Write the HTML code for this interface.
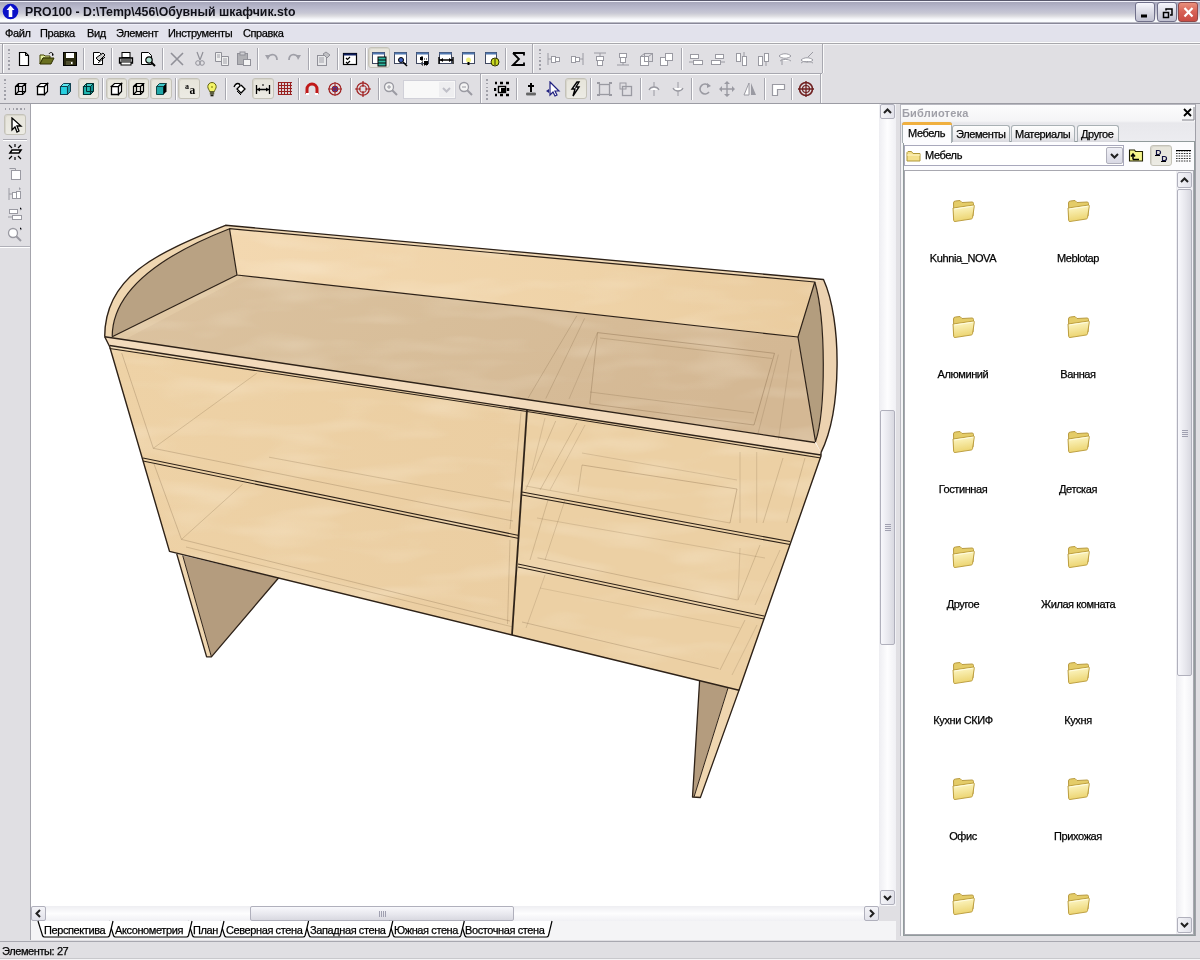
<!DOCTYPE html><html><head><meta charset="utf-8"><style>
*{margin:0;padding:0;box-sizing:border-box}
html,body{width:1200px;height:960px;overflow:hidden;background:#e0dfe3;font-family:"Liberation Sans",sans-serif;font-size:11px;color:#000;letter-spacing:-0.4px}
.a{position:absolute}
span,div{will-change:transform}
body{-webkit-text-stroke-width:0.25px}
#title .t{-webkit-text-stroke:0}
#title{left:0;top:0;width:1200px;height:24px;background:linear-gradient(#58586c 0,#58586c 1px,#f0f0fa 1px,#f0f0fa 2px,#a8a8bc 2.5px,#b4b4c8 6px,#bcbcce 9px,#c8c8d4 13px,#dcdce0 16px,#eeeef2 18px,#fafcfe 20px,#fafcfe 21.5px,#eeeef2 22px,#888898 23px,#888898 24px)}
#title .t{left:25px;top:5px;font-weight:bold;font-size:12.3px;color:#101018;letter-spacing:0}
#menu{left:0;top:24px;width:1200px;height:19px;background:linear-gradient(#f0f0fa 0,#f0f0fa 1px,#e2e2ec 1.5px,#e2e2ec 17px,#dcdce2 18px,#fcfcfc 18px)}
#menu span{position:absolute;top:3px}
.sep{position:absolute;width:2px;border-left:1px solid #a8a8b0;border-right:1px solid #fff}
.hsep{position:absolute;height:2px;border-top:1px solid #a8a8b0;border-bottom:1px solid #fff}
.grip{position:absolute;width:2px;background:repeating-linear-gradient(#a0a0a8 0,#a0a0a8 1.5px,transparent 1.5px,transparent 3.8px)}
.hgrip{position:absolute;height:2px;background:repeating-linear-gradient(90deg,#a0a0a8 0,#a0a0a8 1.5px,transparent 1.5px,transparent 3.8px)}
.pb{position:absolute;border:1px solid #c4c2b8;border-radius:3px;background:linear-gradient(#e6e4da,#ecebe4);box-shadow:inset 1px 1px 0 #d8d6cc}
.sb{position:absolute;border:1px solid #b0b0bc;border-radius:2px;background:linear-gradient(90deg,#f4f4f8,#e2e2ea)}
</style></head><body>
<div id="title" class="a">
<svg class="a" style="left:2px;top:3px" width="17" height="17" viewBox="0 0 17 17"><circle cx="8.5" cy="8.5" r="7.8" fill="#0a10c8"/><path d="M8.5 2.5 L12.5 7 L10.3 7 L10.3 14 L6.7 14 L6.7 7 L4.5 7 Z" fill="#fff"/></svg>
<div class="a t">PRO100 - D:\Temp\456\Обувный шкафчик.sto</div>
<div class="a" style="left:1135px;top:2px;width:20px;height:20px;border:1px solid #70708a;border-radius:3px;background:linear-gradient(#f6f6fc,#dedee8 45%,#c0c0d0)"><svg class="a" style="left:0;top:0" width="19" height="18"><rect x="5" y="11.5" width="6" height="3" fill="#000"/></svg></div>
<div class="a" style="left:1157px;top:2px;width:20px;height:20px;border:1px solid #70708a;border-radius:3px;background:linear-gradient(#f6f6fc,#dedee8 45%,#c0c0d0)"><svg class="a" style="left:0;top:0" width="19" height="18"><path d="M5.5 9.5h5v5h-5z" fill="none" stroke="#000" stroke-width="1.5"/><path d="M8 7.5V6h6v6h-2" fill="none" stroke="#000" stroke-width="1.5"/></svg></div>
<div class="a" style="left:1178px;top:2px;width:20px;height:20px;border:1px solid #904848;border-radius:3px;background:linear-gradient(#e8907c,#d86458 45%,#c84c44)"><svg class="a" style="left:0;top:0" width="19" height="18"><path d="M5.5 5l8 8.5M13.5 5l-8 8.5" stroke="#fff" stroke-width="2.2"/></svg></div>
</div>
<div id="menu" class="a">
<span style="left:5px">Файл</span>
<span style="left:40px">Правка</span>
<span style="left:87px">Вид</span>
<span style="left:116px">Элемент</span>
<span style="left:168px">Инструменты</span>
<span style="left:243px">Справка</span>
</div>
<div class="a" style="left:0;top:43px;width:1200px;height:1px;background:#a8a8ac"></div>
<div class="a" style="left:0;top:44px;width:1200px;height:59px;background:linear-gradient(#f4f4f6 0,#f4f4f6 1px,#e0dfe3 1px)"></div>
<div class="a" style="left:0;top:73px;width:822px;height:1px;background:#a8a8b0"></div>
<div class="a" style="left:0;top:74px;width:822px;height:1px;background:#fcfcfc"></div>
<div class="a" style="left:0;top:103px;width:1200px;height:1px;background:#9c9ca4"></div>
<div class="a" style="left:2px;top:44px;width:1px;height:29px;background:#a0a0a8"></div>
<div class="a" style="left:3px;top:44px;width:1px;height:29px;background:#fff"></div>
<div class="a" style="left:532px;top:44px;width:1px;height:29px;background:#a8a8b0"></div>
<div class="a" style="left:533px;top:44px;width:1px;height:29px;background:#fafafa"></div>
<div class="a" style="left:822px;top:44px;width:1px;height:29px;background:#a8a8b0"></div>
<div class="a" style="left:823px;top:44px;width:1px;height:29px;background:#fafafa"></div>
<div class="a" style="left:480px;top:74px;width:1px;height:29px;background:#a8a8b0"></div>
<div class="a" style="left:481px;top:74px;width:1px;height:29px;background:#fafafa"></div>
<div class="a" style="left:820px;top:74px;width:1px;height:29px;background:#a8a8b0"></div>
<div class="a" style="left:821px;top:74px;width:1px;height:29px;background:#fafafa"></div>
<div class="grip" style="left:8px;top:49px;height:21px"></div>
<div class="grip" style="left:539px;top:49px;height:21px"></div>
<div class="grip" style="left:4px;top:79px;height:21px"></div>
<div class="grip" style="left:486px;top:79px;height:21px"></div>
<div class="sep" style="left:83px;top:48px;height:22px"></div>
<div class="sep" style="left:111px;top:48px;height:22px"></div>
<div class="sep" style="left:162px;top:48px;height:22px"></div>
<div class="sep" style="left:257px;top:48px;height:22px"></div>
<div class="sep" style="left:308px;top:48px;height:22px"></div>
<div class="sep" style="left:337px;top:48px;height:22px"></div>
<div class="sep" style="left:365px;top:48px;height:22px"></div>
<div class="sep" style="left:505px;top:48px;height:22px"></div>
<div class="sep" style="left:681px;top:48px;height:22px"></div>
<div class="sep" style="left:102px;top:78px;height:22px"></div>
<div class="sep" style="left:175px;top:78px;height:22px"></div>
<div class="sep" style="left:225px;top:78px;height:22px"></div>
<div class="sep" style="left:298px;top:78px;height:22px"></div>
<div class="sep" style="left:350px;top:78px;height:22px"></div>
<div class="sep" style="left:378px;top:78px;height:22px"></div>
<div class="sep" style="left:516px;top:78px;height:22px"></div>
<div class="sep" style="left:590px;top:78px;height:22px"></div>
<div class="sep" style="left:640px;top:78px;height:22px"></div>
<div class="sep" style="left:691px;top:78px;height:22px"></div>
<div class="sep" style="left:764px;top:78px;height:22px"></div>
<div class="sep" style="left:791px;top:78px;height:22px"></div>
<div class="pb" style="left:368px;top:47px;width:22px;height:21px"></div>
<div class="pb" style="left:78px;top:78px;width:21px;height:21px"></div>
<div class="pb" style="left:106px;top:78px;width:21px;height:21px"></div>
<div class="pb" style="left:128px;top:78px;width:21px;height:21px"></div>
<div class="pb" style="left:150px;top:78px;width:22px;height:21px"></div>
<div class="pb" style="left:178px;top:78px;width:22px;height:21px"></div>
<div class="pb" style="left:252px;top:78px;width:22px;height:21px"></div>
<div class="pb" style="left:565px;top:78px;width:22px;height:21px"></div>
<svg class="a" style="left:16px;top:51px" width="16" height="16" viewBox="0 0 16 16"><path d="M3.5 1.5h6l3 3v10h-9z" fill="#fff" stroke="#000" stroke-width="1.2"/><path d="M9.5 1.5v3h3" fill="none" stroke="#000"/></svg>
<svg class="a" style="left:39px;top:51px" width="16" height="16" viewBox="0 0 16 16"><path d="M1 4h4l1 1h5v2H4L1 13z" fill="#e4f0a0" stroke="#404000" stroke-width="1"/><path d="M1 13l3-6h11l-3 6z" fill="#6a7020" stroke="#303000" stroke-width="1"/><path d="M10 3c1-2 3-2 4 0" fill="none" stroke="#000"/><path d="M13 2l2 2-2 1z" fill="#000"/></svg>
<svg class="a" style="left:62px;top:51px" width="16" height="16" viewBox="0 0 16 16"><rect x="1.5" y="1.5" width="13" height="13" fill="#2a2a10" stroke="#000"/><rect x="4" y="2" width="8" height="5" fill="#fff"/><rect x="4" y="10" width="7" height="4" fill="#505030"/><rect x="9" y="11" width="1.5" height="2" fill="#fff"/></svg>
<svg class="a" style="left:91px;top:51px" width="16" height="16" viewBox="0 0 16 16"><path d="M2.5 1.5h6l3 3v9h-9z" fill="#fff" stroke="#000"/><path d="M5 7l3 3 6-6-2-2z" fill="#d0d0d0" stroke="#000"/><path d="M7 12l7-6" stroke="#000"/></svg>
<svg class="a" style="left:118px;top:51px" width="16" height="16" viewBox="0 0 16 16"><rect x="4" y="1.5" width="8" height="5" fill="#fff" stroke="#000"/><path d="M1.5 7h13v5h-13z" fill="#c8c8c8" stroke="#000" stroke-width="1.3"/><rect x="3" y="11" width="10" height="3" fill="#fff" stroke="#000"/><path d="M3 9h10" stroke="#000"/></svg>
<svg class="a" style="left:140px;top:51px" width="16" height="16" viewBox="0 0 16 16"><path d="M1.5 1.5h7l3 3v9h-10z" fill="#fff" stroke="#000"/><circle cx="9" cy="9" r="3.2" fill="#b0e0d0" stroke="#000" stroke-width="1.2"/><path d="M11 11l4 4" stroke="#000" stroke-width="2"/></svg>
<svg class="a" style="left:169px;top:51px" width="16" height="16" viewBox="0 0 16 16"><path d="M2 2l12 12M14 2L2 14" stroke="#909098" stroke-width="1.6"/></svg>
<svg class="a" style="left:192px;top:51px" width="16" height="16" viewBox="0 0 16 16"><path d="M5 1l3 8M11 1L8 9" stroke="#909098" stroke-width="1.2"/><circle cx="6" cy="12" r="2.3" fill="none" stroke="#909098"/><circle cx="10" cy="12" r="2.3" fill="none" stroke="#909098"/></svg>
<svg class="a" style="left:214px;top:51px" width="16" height="16" viewBox="0 0 16 16"><path d="M1.5 1.5h6v9h-6z" fill="#f0f0f0" stroke="#909098"/><path d="M7.5 5.5h7v9h-7z" fill="#f0f0f0" stroke="#909098"/><path d="M9 8h4M9 10h4M9 12h4M3 4h3M3 6h3" stroke="#a0a0a8"/></svg>
<svg class="a" style="left:236px;top:51px" width="16" height="16" viewBox="0 0 16 16"><rect x="1.5" y="2.5" width="10" height="11" fill="#b0b0b4" stroke="#909098"/><rect x="4" y="1" width="5" height="3" fill="#d0d0d4" stroke="#909098"/><rect x="7.5" y="8.5" width="7" height="6" fill="#f4f4f4" stroke="#909098"/></svg>
<svg class="a" style="left:264px;top:51px" width="16" height="16" viewBox="0 0 16 16"><path d="M4 6c3-4 9-3 9 3" fill="none" stroke="#a0a0a8" stroke-width="1.8"/><path d="M1 4l5 0-2 5z" fill="#a0a0a8"/></svg>
<svg class="a" style="left:286px;top:51px" width="16" height="16" viewBox="0 0 16 16"><path d="M12 6c-3-4-9-3-9 3" fill="none" stroke="#a0a0a8" stroke-width="1.8"/><path d="M15 4l-5 0 2 5z" fill="#a0a0a8"/></svg>
<svg class="a" style="left:315px;top:51px" width="16" height="16" viewBox="0 0 16 16"><rect x="2.5" y="4.5" width="9" height="10" fill="#e8e8ea" stroke="#909098"/><path d="M4 7h5M4 9h5M4 11h5" stroke="#a0a0a8"/><path d="M8 3l3-2 4 3-3 3z" fill="#c0c0c4" stroke="#909098"/></svg>
<svg class="a" style="left:342px;top:51px" width="16" height="16" viewBox="0 0 16 16"><rect x="1.5" y="2.5" width="13" height="11" fill="#fff" stroke="#000" stroke-width="1.2"/><rect x="1.5" y="2.5" width="13" height="2" fill="#102060"/><path d="M4 7l1.5 1.5L8 6M4 11l1.5 1.5L8 10" fill="none" stroke="#000" stroke-width="1.2"/></svg>
<svg class="a" style="left:371px;top:51px" width="16" height="16" viewBox="0 0 16 16"><rect x="1.5" y="1.5" width="12" height="11" fill="#fff" stroke="#404860"/><rect x="1.5" y="1.5" width="12" height="2" fill="#5078b0"/><rect x="7" y="6" width="8" height="9" fill="#30b8a0" stroke="#000"/><path d="M7 9h8M7 12h8" stroke="#000"/></svg>
<svg class="a" style="left:393px;top:51px" width="16" height="16" viewBox="0 0 16 16"><rect x="1.5" y="1.5" width="12" height="11" fill="#fff" stroke="#404860"/><rect x="1.5" y="1.5" width="12" height="2" fill="#5078b0"/><circle cx="8" cy="9" r="2.5" fill="#4060c0" stroke="#000"/><path d="M10 11l4 4" stroke="#000" stroke-width="1.6"/></svg>
<svg class="a" style="left:415px;top:51px" width="16" height="16" viewBox="0 0 16 16"><rect x="1.5" y="1.5" width="12" height="11" fill="#fff" stroke="#404860"/><rect x="1.5" y="1.5" width="12" height="2" fill="#5078b0"/><path d="M7 5v10M7 8h5M7 11h5M7 14h5" stroke="#000" stroke-dasharray="1 1"/><rect x="5" y="6" width="3" height="3" fill="#000"/><rect x="9" y="10" width="4" height="4" fill="#000"/></svg>
<svg class="a" style="left:438px;top:51px" width="16" height="16" viewBox="0 0 16 16"><rect x="1.5" y="1.5" width="12" height="11" fill="#fff" stroke="#404860"/><rect x="1.5" y="1.5" width="12" height="2" fill="#5078b0"/><path d="M1 9h14M1 6v7M15 6v7" stroke="#000" stroke-width="1.4"/><path d="M2 9l3-2v4zM14 9l-3-2v4z" fill="#000"/></svg>
<svg class="a" style="left:461px;top:51px" width="16" height="16" viewBox="0 0 16 16"><rect x="1.5" y="1.5" width="12" height="11" fill="#fff" stroke="#404860"/><rect x="1.5" y="1.5" width="12" height="2" fill="#5078b0"/><circle cx="7.5" cy="9" r="2.5" fill="#f0f080"/><rect x="6.5" y="11" width="2" height="3" fill="#000"/></svg>
<svg class="a" style="left:484px;top:51px" width="16" height="16" viewBox="0 0 16 16"><rect x="1.5" y="1.5" width="11" height="11" fill="#fff" stroke="#404860"/><rect x="1.5" y="1.5" width="11" height="2" fill="#5078b0"/><circle cx="11" cy="11" r="4" fill="#c8d820" stroke="#303000"/><path d="M11 8v6" stroke="#303000"/></svg>
<svg class="a" style="left:511px;top:51px" width="16" height="16" viewBox="0 0 16 16"><path d="M2 2h11v2.5M2 2l6 6-6 6h11v-2.5" fill="none" stroke="#000" stroke-width="1.8"/></svg>
<svg class="a" style="left:546px;top:51px" width="16" height="16" viewBox="0 0 16 16"><path d="M2 2v12M2 8h3" stroke="#9a9aa2"/><rect x="5.5" y="5.5" width="4" height="6" fill="#fff" stroke="#9a9aa2"/><rect x="9.5" y="6.5" width="4" height="4" fill="#fff" stroke="#9a9aa2"/></svg>
<svg class="a" style="left:569px;top:51px" width="16" height="16" viewBox="0 0 16 16"><path d="M14 2v12M11 8h3" stroke="#9a9aa2"/><rect x="2.5" y="5.5" width="4" height="6" fill="#fff" stroke="#9a9aa2"/><rect x="6.5" y="6.5" width="4" height="4" fill="#fff" stroke="#9a9aa2"/></svg>
<svg class="a" style="left:592px;top:51px" width="16" height="16" viewBox="0 0 16 16"><path d="M2 2h12M8 2v3" stroke="#9a9aa2"/><rect x="4.5" y="5.5" width="7" height="4" fill="#fff" stroke="#9a9aa2"/><rect x="5.5" y="9.5" width="5" height="5" fill="#fff" stroke="#9a9aa2"/></svg>
<svg class="a" style="left:615px;top:51px" width="16" height="16" viewBox="0 0 16 16"><path d="M2 14h12M8 11v3" stroke="#9a9aa2"/><rect x="4.5" y="2.5" width="7" height="4" fill="#fff" stroke="#9a9aa2"/><rect x="5.5" y="6.5" width="5" height="5" fill="#fff" stroke="#9a9aa2"/></svg>
<svg class="a" style="left:638px;top:51px" width="16" height="16" viewBox="0 0 16 16"><rect x="2.5" y="5.5" width="8" height="9" fill="#fff" stroke="#9a9aa2"/><rect x="6.5" y="2.5" width="8" height="8" fill="none" stroke="#9a9aa2"/><path d="M2.5 5.5l4-3M10.5 5.5l4-3" stroke="#9a9aa2"/></svg>
<svg class="a" style="left:658px;top:51px" width="16" height="16" viewBox="0 0 16 16"><rect x="2.5" y="6.5" width="7" height="8" fill="#fff" stroke="#9a9aa2"/><rect x="7.5" y="2.5" width="7" height="7" fill="#fff" stroke="#9a9aa2"/></svg>
<svg class="a" style="left:688px;top:51px" width="16" height="16" viewBox="0 0 16 16"><rect x="2.5" y="3.5" width="8" height="4" fill="#fff" stroke="#9a9aa2"/><rect x="5.5" y="9.5" width="9" height="4" fill="#fff" stroke="#9a9aa2"/><path d="M1 11h4" stroke="#9a9aa2"/></svg>
<svg class="a" style="left:710px;top:51px" width="16" height="16" viewBox="0 0 16 16"><rect x="5.5" y="3.5" width="8" height="4" fill="#fff" stroke="#9a9aa2"/><rect x="1.5" y="9.5" width="9" height="4" fill="#fff" stroke="#9a9aa2"/><path d="M11 11h4" stroke="#9a9aa2"/></svg>
<svg class="a" style="left:733px;top:51px" width="16" height="16" viewBox="0 0 16 16"><rect x="3.5" y="2.5" width="4" height="8" fill="#fff" stroke="#9a9aa2"/><rect x="9.5" y="5.5" width="4" height="9" fill="#fff" stroke="#9a9aa2"/><path d="M11 1v4" stroke="#9a9aa2"/></svg>
<svg class="a" style="left:755px;top:51px" width="16" height="16" viewBox="0 0 16 16"><rect x="3.5" y="5.5" width="4" height="9" fill="#fff" stroke="#9a9aa2"/><rect x="9.5" y="2.5" width="4" height="8" fill="#fff" stroke="#9a9aa2"/><path d="M11 11v4" stroke="#9a9aa2"/></svg>
<svg class="a" style="left:777px;top:51px" width="16" height="16" viewBox="0 0 16 16"><path d="M2 5c3-3 9-3 12 0-3 3-9 3-12 0zM3 10c3-2 8-2 11 0" fill="#fff" stroke="#9a9aa2"/><path d="M5 8v6" stroke="#9a9aa2"/></svg>
<svg class="a" style="left:799px;top:51px" width="16" height="16" viewBox="0 0 16 16"><path d="M2 9c3-3 9-3 12 0-3 3-9 3-12 0zM2 12c3-2 8-2 12 0" fill="#fff" stroke="#9a9aa2"/><path d="M9 6l5-5" stroke="#9a9aa2"/></svg>
<svg class="a" style="left:13px;top:81px" width="15" height="16" viewBox="0 0 15 16"><path d="M2.5 5.5h7v8h-7z M2.5 5.5l3-3h7l-3 3 M12.5 2.5v8l-3 3 M5.5 2.5v8h7 M2.5 13.5l3-3" fill="none" stroke="#000" stroke-width="1.2"/></svg>
<svg class="a" style="left:35px;top:81px" width="15" height="16" viewBox="0 0 15 16"><path d="M2.5 5.5h7v8h-7z" fill="#fff" stroke="#000" stroke-width="1.3"/><path d="M2.5 5.5l3-3h7l-3 3z" fill="#fff" stroke="#000" stroke-width="1.2"/><path d="M9.5 5.5l3-3v8l-3 3z" fill="#fff" stroke="#000" stroke-width="1.2"/></svg>
<svg class="a" style="left:58px;top:81px" width="15" height="16" viewBox="0 0 15 16"><path d="M2.5 5.5h7v8h-7z" fill="#28d0e0" stroke="#104050" stroke-width="1.1"/><path d="M2.5 5.5l3-3h7l-3 3z" fill="#60e8f0" stroke="#104050"/><path d="M9.5 5.5l3-3v8l-3 3z" fill="#20a0b0" stroke="#104050"/></svg>
<svg class="a" style="left:81px;top:81px" width="15" height="16" viewBox="0 0 15 16"><path d="M2.5 5.5h7v8h-7z" fill="#20b8b0" stroke="#003030" stroke-width="1.2"/><path d="M2.5 5.5l3-3h7l-3 3z" fill="#40c8c0" stroke="#003030"/><path d="M9.5 5.5l3-3v8l-3 3z" fill="#109090" stroke="#003030"/><path d="M5.5 2.5v8h7" fill="none" stroke="#003030"/></svg>
<svg class="a" style="left:109px;top:81px" width="15" height="16" viewBox="0 0 15 16"><path d="M2.5 5.5h7v8h-7z" fill="#fff" stroke="#000" stroke-width="1.3"/><path d="M2.5 5.5l3-3h7l-3 3z" fill="#fff" stroke="#000" stroke-width="1.2"/><path d="M9.5 5.5l3-3v8l-3 3z" fill="#fff" stroke="#000" stroke-width="1.2"/></svg>
<svg class="a" style="left:131px;top:81px" width="15" height="16" viewBox="0 0 15 16"><path d="M2.5 5.5h7v8h-7z M2.5 5.5l3-3h7l-3 3 M12.5 2.5v8l-3 3 M5.5 2.5v8h7 M2.5 13.5l3-3" fill="none" stroke="#000" stroke-width="1.2"/></svg>
<svg class="a" style="left:154px;top:81px" width="15" height="16" viewBox="0 0 15 16"><path d="M2.5 5.5h7v8h-7z" fill="#20a8a8" stroke="#104848"/><path d="M2.5 5.5l3-3h7l-3 3z" fill="#40c8c8" stroke="#104848"/><path d="M9.5 5.5l3-3v8l-3 3z" fill="#000" /></svg>
<svg class="a" style="left:182px;top:81px" width="16" height="16" viewBox="0 0 16 16"><text x="3" y="8" font-size="8" font-family="Liberation Serif" font-weight="bold" fill="#000" letter-spacing="0">a</text><text x="7.5" y="12.5" font-size="11.5" font-family="Liberation Serif" font-weight="bold" fill="#000" letter-spacing="0">a</text></svg>
<svg class="a" style="left:204px;top:81px" width="16" height="16" viewBox="0 0 16 16"><path d="M8 1.5a4.2 4.2 0 0 1 4.2 4.2c0 2-1.5 3-1.8 4.8H5.6c-.3-1.8-1.8-2.8-1.8-4.8A4.2 4.2 0 0 1 8 1.5z" fill="#f4f468" stroke="#606010" stroke-width="1"/><circle cx="8" cy="6" r="1" fill="#a0a020"/><rect x="5.8" y="10.5" width="4.4" height="3" fill="#606040"/><rect x="6.5" y="13.5" width="3" height="1.8" fill="#202010"/></svg>
<svg class="a" style="left:231px;top:81px" width="16" height="16" viewBox="0 0 16 16"><path d="M3 6c2-5 6-4 6-1l-3 3 4 4 4-4-4-4" fill="#fff" stroke="#000" stroke-width="1.3"/><path d="M6 10l4 4" stroke="#000"/></svg>
<svg class="a" style="left:255px;top:81px" width="16" height="16" viewBox="0 0 16 16"><path d="M1.5 4v9M14.5 4v9M2 8.5h12" stroke="#000" stroke-width="1.3"/><path d="M2 8.5l3-2v4zM14 8.5l-3-2v4z" fill="#000"/><path d="M7 4h2" stroke="#000"/></svg>
<svg class="a" style="left:277px;top:81px" width="16" height="16" viewBox="0 0 16 16"><path d="M1 1.5h14M1 4.5h14M1 7.5h14M1 10.5h14M1 13.5h14M1.5 1v13M4.5 1v13M7.5 1v13M10.5 1v13M13.5 1v13" stroke="#982020" stroke-width="1.1"/></svg>
<svg class="a" style="left:304px;top:81px" width="16" height="16" viewBox="0 0 16 16"><path d="M3 13V8a5 5 0 0 1 10 0v5" fill="none" stroke="#c01818" stroke-width="3"/><path d="M2 13h3M11 13h3" stroke="#fff" stroke-width="2"/></svg>
<svg class="a" style="left:327px;top:81px" width="16" height="16" viewBox="0 0 16 16"><circle cx="8" cy="8" r="6" fill="none" stroke="#a02020" stroke-width="1.2"/><circle cx="8" cy="8" r="3" fill="#3040c0" stroke="#a02020"/><path d="M8 1v14M1 8h14" stroke="#a02020"/></svg>
<svg class="a" style="left:355px;top:81px" width="16" height="16" viewBox="0 0 16 16"><circle cx="8" cy="8" r="6.2" fill="none" stroke="#a02020" stroke-width="1.3"/><circle cx="8" cy="8" r="3.5" fill="none" stroke="#a02020"/><path d="M8 0v6M8 10v6M0 8h6M10 8h6" stroke="#a02020" stroke-width="1.2"/></svg>
<svg class="a" style="left:383px;top:81px" width="16" height="16" viewBox="0 0 16 16"><circle cx="6" cy="6" r="4.5" fill="#f4f4f4" stroke="#9a9aa2" stroke-width="1.3"/><path d="M9 9l5 5" stroke="#9a9aa2" stroke-width="2"/><path d="M4 6h4M6 4v4" stroke="#9a9aa2"/></svg>
<div class="a" style="left:403px;top:80px;width:53px;height:19px;border:1px solid #d0d0d8;background:#f8f8f8"><div class="a" style="left:35px;top:1px;width:15px;height:15px;background:#eeeef0"><svg class="a" width="15" height="15"><path d="M4 6l3.5 3.5L11 6" fill="none" stroke="#c0c0c8" stroke-width="2"/></svg></div></div>
<svg class="a" style="left:458px;top:81px" width="16" height="16" viewBox="0 0 16 16"><circle cx="6" cy="6" r="4.5" fill="#f4f4f4" stroke="#9a9aa2" stroke-width="1.3"/><path d="M9 9l5 5" stroke="#9a9aa2" stroke-width="2"/><path d="M4 6h4" stroke="#9a9aa2"/></svg>
<svg class="a" style="left:494px;top:81px" width="16" height="16" viewBox="0 0 16 16"><path d="M1 2h2M6 2h3M12 2h3M1 14h2M6 14h3M12 14h3M1 7v3M14 7v3" stroke="#000" stroke-width="2.4"/><rect x="4.5" y="5.5" width="7" height="6" fill="#fff" stroke="#000" stroke-width="1.4"/><rect x="7" y="7" width="5" height="4" fill="#000"/></svg>
<svg class="a" style="left:523px;top:81px" width="16" height="16" viewBox="0 0 16 16"><path d="M8 2v9M5 5h6" stroke="#000" stroke-width="2"/><path d="M3.5 13h9" stroke="#000" stroke-width="2.5"/><path d="M4 13h8" stroke="#fff" stroke-width="0.8"/></svg>
<svg class="a" style="left:545px;top:81px" width="16" height="16" viewBox="0 0 16 16"><path d="M5 1l9 9-4 0 2 4-2 1-2-4-3 3z" fill="#fff" stroke="#202080" stroke-width="1.2"/><path d="M1 10l3-2v4z" fill="#202080"/></svg>
<svg class="a" style="left:568px;top:81px" width="16" height="16" viewBox="0 0 16 16"><path d="M9 1L4 8h3l-2 7 6-9H8l3-5z" fill="#fff" stroke="#000" stroke-width="1.4"/></svg>
<svg class="a" style="left:596px;top:81px" width="16" height="16" viewBox="0 0 16 16"><rect x="3.5" y="3.5" width="10" height="10" fill="none" stroke="#9a9aa2" stroke-width="1.3"/><path d="M1 2h3M1 14h3M13 2h3M13 14h3" stroke="#9a9aa2" stroke-width="2"/></svg>
<svg class="a" style="left:618px;top:81px" width="16" height="16" viewBox="0 0 16 16"><rect x="4.5" y="5.5" width="9" height="9" fill="none" stroke="#9a9aa2" stroke-width="1.3"/><rect x="2" y="2" width="6" height="6" fill="none" stroke="#9a9aa2"/></svg>
<svg class="a" style="left:646px;top:81px" width="16" height="16" viewBox="0 0 16 16"><path d="M8 1v14M3 8h10" stroke="#9a9aa2"/><path d="M3 9c2-4 8-4 10 0" fill="#fff" stroke="#9a9aa2" stroke-width="1.3"/></svg>
<svg class="a" style="left:670px;top:81px" width="16" height="16" viewBox="0 0 16 16"><path d="M8 1v14M3 8h10" stroke="#9a9aa2"/><path d="M3 7c2 4 8 4 10 0" fill="#fff" stroke="#9a9aa2" stroke-width="1.3"/></svg>
<svg class="a" style="left:697px;top:81px" width="16" height="16" viewBox="0 0 16 16"><path d="M12 5a5 5 0 1 0 0 6" fill="none" stroke="#9a9aa2" stroke-width="1.6"/><path d="M10 2l4 3-4 2z" fill="#9a9aa2"/></svg>
<svg class="a" style="left:719px;top:81px" width="16" height="16" viewBox="0 0 16 16"><path d="M8 1v14M1 8h14" stroke="#9a9aa2" stroke-width="1.4"/><path d="M8 0l3 3H5zM8 16l3-3H5zM0 8l3 3V5zM16 8l-3 3V5z" fill="#9a9aa2"/></svg>
<svg class="a" style="left:742px;top:81px" width="16" height="16" viewBox="0 0 16 16"><path d="M7 2L2 14h5z" fill="#fff" stroke="#9a9aa2"/><path d="M9 2l5 12H9z" fill="#9a9aa2"/></svg>
<svg class="a" style="left:770px;top:81px" width="16" height="16" viewBox="0 0 16 16"><path d="M2.5 3.5h12v5h-7v6h-5z" fill="#fff" stroke="#9a9aa2" stroke-width="1.2"/></svg>
<svg class="a" style="left:798px;top:81px" width="16" height="16" viewBox="0 0 16 16"><circle cx="8" cy="8" r="6.5" fill="none" stroke="#702020" stroke-width="1.6"/><circle cx="8" cy="8" r="3.5" fill="none" stroke="#702020" stroke-width="1.2"/><path d="M8 0v16M0 8h16" stroke="#702020" stroke-width="1.3"/></svg>
<div class="a" style="left:0;top:104px;width:30px;height:836px;background:#e0dfe3"></div>
<div class="a" style="left:30px;top:104px;width:1px;height:836px;background:#a4a4ac"></div>
<div class="hgrip" style="left:5px;top:108px;width:20px"></div>
<div class="pb" style="left:4px;top:114px;width:22px;height:21px"></div>
<svg class="a" style="left:8px;top:117px" width="16" height="16" viewBox="0 0 16 16"><path d="M4 1v12l3-3 2 5 2-1-2-5h4z" fill="#fff" stroke="#000" stroke-width="1.3"/></svg>
<div class="hsep" style="left:3px;top:139px;width:24px"></div>
<svg class="a" style="left:7px;top:144px" width="16" height="16" viewBox="0 0 16 16"><path d="M3 9l2-3h9l-2 3z" fill="#fff" stroke="#000" stroke-width="1.6"/><path d="M2 1l3 3M14 1l-3 3M8 0v3M2 15l3-3M14 15l-3-3M8 13v3" stroke="#000" stroke-width="1.2"/></svg>
<svg class="a" style="left:7px;top:165px" width="16" height="16" viewBox="0 0 16 16"><rect x="4.5" y="5.5" width="9" height="9" fill="#fff" stroke="#9a9aa2"/><path d="M2.5 3.5h6v2" fill="none" stroke="#9a9aa2"/></svg>
<svg class="a" style="left:7px;top:186px" width="16" height="16" viewBox="0 0 16 16"><path d="M2 2v12M2 8h3" stroke="#9a9aa2"/><rect x="5.5" y="6.5" width="4" height="6" fill="#fff" stroke="#9a9aa2"/><rect x="9.5" y="5.5" width="4" height="7" fill="#fff" stroke="#9a9aa2"/><path d="M12 1l2 2-2 1" fill="#9a9aa2"/></svg>
<svg class="a" style="left:7px;top:206px" width="16" height="16" viewBox="0 0 16 16"><rect x="2.5" y="3.5" width="8" height="4" fill="#fff" stroke="#9a9aa2"/><rect x="5.5" y="9.5" width="9" height="4" fill="#fff" stroke="#9a9aa2"/><path d="M1 11h4M13 1l2 2-2 1" stroke="#9a9aa2"/></svg>
<svg class="a" style="left:7px;top:226px" width="16" height="16" viewBox="0 0 16 16"><circle cx="6" cy="7" r="4.5" fill="#fff" stroke="#9a9aa2" stroke-width="1.3"/><path d="M9 10l5 5" stroke="#9a9aa2" stroke-width="2"/><path d="M13 1l2 2-2 1" stroke="#9a9aa2"/></svg>
<div class="a" style="left:0;top:246px;width:30px;height:1px;background:#b0b0b8"></div>
<div class="a" style="left:0;top:247px;width:30px;height:1px;background:#fff"></div>
<div class="a" style="left:31px;top:104px;width:848px;height:802px;background:#fff"></div>
<svg class="a" style="left:0;top:0" width="1200" height="960" viewBox="0 0 1200 960">
<defs><linearGradient id="gtop" x1="0" y1="0" x2="1" y2="0.3"><stop offset="0" stop-color="#dcc3a0"/><stop offset="0.5" stop-color="#d8be9a"/><stop offset="1" stop-color="#d4b894"/></linearGradient><linearGradient id="gback" x1="0" y1="0" x2="1" y2="0"><stop offset="0" stop-color="#f3d8b0"/><stop offset="0.6" stop-color="#efd3a8"/><stop offset="1" stop-color="#eacc9f"/></linearGradient><linearGradient id="gfront" x1="0" y1="0" x2="1" y2="0"><stop offset="0" stop-color="#eed2a6"/><stop offset="1" stop-color="#ebcea2"/></linearGradient><filter id="grain" x="0" y="0" width="1" height="1"><feTurbulence type="fractalNoise" baseFrequency="0.012 0.05" numOctaves="2" seed="7"/><feColorMatrix type="matrix" values="0 0 0 0 1  0 0 0 0 0.93  0 0 0 0 0.8  1.2 0 0 0 -0.55"/></filter><clipPath id="fclip"><polygon points="109.7,346.7 527,410 512,635 169.5,551.4"/><polygon points="527,410 821,456 739,690.3 512,635"/><polygon points="229.5,228.7 814.8,282 798,337 237,275"/><polygon points="104.7,336.7 815,442.5 815.5,441.6 798,337 237,275 112.2,336.7"/></clipPath></defs>
<polygon points="229.5,228.7 814.8,282 798,337 237,275" fill="url(#gback)"/>
<polygon points="104.7,336.7 815,442.5 815.5,441.6 798,337 237,275 112.2,336.7" fill="url(#gtop)"/>
<polygon points="112.2,336.7 237,275 243,277 122,341" fill="#e2caa6" opacity="0.8"/>
<path d="M112.2,336.7 C112.2,286.7 168.3,252.6 229.5,228.7 L237,275 Z" fill="#b9a283"/>
<path d="M104.7,336.7 C104.7,276.7 155,253.8 225.5,225.3 L229.5,228.7 C168.3,252.6 112.2,286.7 112.2,336.7 Z" fill="#efd6b0"/>
<polygon points="225.5,225.3 823.5,279.5 814.8,282 229.5,228.7" fill="#f0d8b4"/>
<path d="M814.8,282 L798,337 L815.5,441.6 C826,410 826,320 814.8,282 Z" fill="#b39d7e"/>
<path d="M823.5,279.5 C842,320 842,410 821,452.6 L815.5,441.6 C826,410 826,320 814.8,282 Z" fill="#ecd2b0"/>
<polygon points="104.7,336.7 815,442.5 821,452.6 821,456 109.7,346.7" fill="#f3dbbc"/>
<polygon points="109.7,346.7 527,410 512,635 169.5,551.4" fill="url(#gfront)"/>
<polygon points="527,410 821,456 739,690.3 512,635" fill="#ecd0a4"/>
<polygon points="182.7,555.5 278.5,578 211.4,656.8" fill="#b49c7e"/>
<polygon points="176.7,553.8 182.7,555.5 211.4,656.8 206.6,656.8" fill="#efd6b0"/>
<polygon points="699.6,680.5 728,687.5 694,797 692.5,797" fill="#b49c7e"/>
<polygon points="728,687.5 739,690.3 700.4,797.5 694,797" fill="#efd6b0"/>
<rect x="100" y="220" width="740" height="480" filter="url(#grain)" clip-path="url(#fclip)" opacity="0.5"/>
<polyline points="121.7,353 153.3,448.3 513,521" fill="none" stroke="#7a6040" stroke-width="0.8" opacity="0.35"/>
<polyline points="153.3,448.3 256.7,373.3 269,457.2" fill="none" stroke="#7a6040" stroke-width="0.8" opacity="0.0"/>
<polyline points="153.3,448.3 256.7,373.3" fill="none" stroke="#7a6040" stroke-width="0.8" opacity="0.3"/>
<polyline points="256.7,373.3 521,412.5" fill="none" stroke="#7a6040" stroke-width="0.8" opacity="0.0"/>
<polyline points="269,457.2 510,502" fill="none" stroke="#7a6040" stroke-width="0.8" opacity="0.3"/>
<polyline points="521,412.5 510,529" fill="none" stroke="#7a6040" stroke-width="0.8" opacity="0.3"/>
<polyline points="154,464 181.5,539.4 510,621" fill="none" stroke="#7a6040" stroke-width="0.8" opacity="0.35"/>
<polyline points="181.5,539.4 242.6,484.3" fill="none" stroke="#7a6040" stroke-width="0.8" opacity="0.3"/>
<polyline points="186,547 513,627" fill="none" stroke="#7a6040" stroke-width="0.8" opacity="0.3"/>
<polyline points="510,540 507.5,624" fill="none" stroke="#7a6040" stroke-width="0.8" opacity="0.3"/>
<polyline points="597.5,332.6 774.5,353.3 754,425" fill="none" stroke="#7a6040" stroke-width="0.8" opacity="0.45"/>
<polyline points="597.5,332.6 589.8,403.7 754,425" fill="none" stroke="#7a6040" stroke-width="0.8" opacity="0.4"/>
<polyline points="600,338 772,358.5" fill="none" stroke="#7a6040" stroke-width="0.8" opacity="0.3"/>
<polyline points="590,392 754,413" fill="none" stroke="#7a6040" stroke-width="0.8" opacity="0.3"/>
<polyline points="527.8,398.5 576.8,315.8" fill="none" stroke="#7a6040" stroke-width="0.8" opacity="0.3"/>
<polyline points="545.8,398.5 584.6,318.4" fill="none" stroke="#7a6040" stroke-width="0.8" opacity="0.3"/>
<polyline points="569,399 597.5,332.6" fill="none" stroke="#7a6040" stroke-width="0.8" opacity="0.25"/>
<polyline points="778.4,354.6 757.7,434.7" fill="none" stroke="#7a6040" stroke-width="0.8" opacity="0.25"/>
<polyline points="791.3,349.4 778.4,439.9" fill="none" stroke="#7a6040" stroke-width="0.8" opacity="0.25"/>
<polyline points="582,465 737,489 730,523" fill="none" stroke="#7a6040" stroke-width="0.8" opacity="0.4"/>
<polyline points="582,453 737,480" fill="none" stroke="#7a6040" stroke-width="0.8" opacity="0.25"/>
<polyline points="582,465 578,492" fill="none" stroke="#7a6040" stroke-width="0.8" opacity="0.3"/>
<polyline points="525.6,486 730,523" fill="none" stroke="#7a6040" stroke-width="0.8" opacity="0.3"/>
<polyline points="525.6,490 555.7,421" fill="none" stroke="#7a6040" stroke-width="0.8" opacity="0.3"/>
<polyline points="540,490 577,423" fill="none" stroke="#7a6040" stroke-width="0.8" opacity="0.3"/>
<polyline points="550,490 585,425" fill="none" stroke="#7a6040" stroke-width="0.8" opacity="0.25"/>
<polyline points="532,470 545,418" fill="none" stroke="#7a6040" stroke-width="0.8" opacity="0.25"/>
<polyline points="763,523 783,458" fill="none" stroke="#7a6040" stroke-width="0.8" opacity="0.3"/>
<polyline points="786.7,523 805,458" fill="none" stroke="#7a6040" stroke-width="0.8" opacity="0.3"/>
<polyline points="740,452 740,523" fill="none" stroke="#7a6040" stroke-width="0.8" opacity="0.25"/>
<polyline points="756.7,452 756.7,523" fill="none" stroke="#7a6040" stroke-width="0.8" opacity="0.25"/>
<polyline points="537,518 765,558" fill="none" stroke="#7a6040" stroke-width="0.8" opacity="0.25"/>
<polyline points="537.5,557.8 737.5,600" fill="none" stroke="#7a6040" stroke-width="0.8" opacity="0.35"/>
<polyline points="530,560 548,500" fill="none" stroke="#7a6040" stroke-width="0.8" opacity="0.3"/>
<polyline points="545,560 565,500" fill="none" stroke="#7a6040" stroke-width="0.8" opacity="0.25"/>
<polyline points="738,600 760,545" fill="none" stroke="#7a6040" stroke-width="0.8" opacity="0.3"/>
<polyline points="755,605 780,550" fill="none" stroke="#7a6040" stroke-width="0.8" opacity="0.25"/>
<polyline points="740,548 738,600" fill="none" stroke="#7a6040" stroke-width="0.8" opacity="0.25"/>
<polyline points="522,622 718.75,668.75" fill="none" stroke="#7a6040" stroke-width="0.8" opacity="0.35"/>
<polyline points="540,588 740,628" fill="none" stroke="#7a6040" stroke-width="0.8" opacity="0.2"/>
<polyline points="526,628 545,575" fill="none" stroke="#7a6040" stroke-width="0.8" opacity="0.25"/>
<polyline points="720,670 745,620" fill="none" stroke="#7a6040" stroke-width="0.8" opacity="0.3"/>
<polyline points="732,675 757,625" fill="none" stroke="#7a6040" stroke-width="0.8" opacity="0.25"/>
<path d="M104.7,336.7 C104.7,276.7 155,253.8 225.5,225.3 L823.5,279.5 C842,320 842,410 821,452.6" fill="none" stroke="#2e2218" stroke-width="1.4" stroke-linejoin="round"/>
<path d="M112.2,336.7 C112.2,286.7 168.3,252.6 229.5,228.7 L237,275 L798,337 L814.8,282 L229.5,228.7" fill="none" stroke="#2e2218" stroke-width="1.2" stroke-linejoin="round"/>
<path d="M814.8,282 C826,320 826,410 815.5,441.6 L798,337" fill="none" stroke="#2e2218" stroke-width="1.2" stroke-linejoin="round"/>
<path d="M112.2,336.7 L237,275" fill="none" stroke="#2e2218" stroke-width="1.2" stroke-linejoin="round"/>
<path d="M104.7,336.7 L815,442.5" fill="none" stroke="#2e2218" stroke-width="1.4" stroke-linejoin="round"/>
<path d="M109.7,345.5 L821,455" fill="none" stroke="#2e2218" stroke-width="1.4" stroke-linejoin="round"/>
<path d="M109.7,348.5 L527,411.5 M527,411.5 L821,458" fill="none" stroke="#2e2218" stroke-width="1.1" stroke-linejoin="round"/>
<path d="M104.7,336.7 L109.7,346.7 L169.5,551.4 L512,635 L739,690.3 L821,456 L821,452.6" fill="none" stroke="#2e2218" stroke-width="1.4" stroke-linejoin="round"/>
<path d="M527,410 L512,635" fill="none" stroke="#2e2218" stroke-width="1.8" stroke-linejoin="round"/>
<path d="M143,458 L519,535.5" fill="none" stroke="#2e2218" stroke-width="1.1" stroke-linejoin="round"/>
<path d="M143,461 L519,538.5" fill="none" stroke="#2e2218" stroke-width="1.1" stroke-linejoin="round"/>
<path d="M522,492 L790,541.5" fill="none" stroke="#2e2218" stroke-width="1.1" stroke-linejoin="round"/>
<path d="M522,495 L790,544.5" fill="none" stroke="#2e2218" stroke-width="1.1" stroke-linejoin="round"/>
<path d="M518,564 L764,616" fill="none" stroke="#2e2218" stroke-width="1.1" stroke-linejoin="round"/>
<path d="M518,567 L764,619" fill="none" stroke="#2e2218" stroke-width="1.1" stroke-linejoin="round"/>
<path d="M176.7,553.8 L206.6,656.8 L211.4,656.8 L278.5,578" fill="none" stroke="#2e2218" stroke-width="1.3" stroke-linejoin="round"/>
<path d="M182.7,555.5 L211.4,656.8" fill="none" stroke="#2e2218" stroke-width="1.0" stroke-linejoin="round"/>
<path d="M699.6,681 L692.5,797 L700.4,797.5 L739,690.3" fill="none" stroke="#2e2218" stroke-width="1.3" stroke-linejoin="round"/>
<path d="M728,688 L694,797" fill="none" stroke="#2e2218" stroke-width="1.0" stroke-linejoin="round"/>
</svg>
<div class="a" style="left:879px;top:104px;width:17px;height:802px;background:linear-gradient(90deg,#eeeef2,#fdfdfe 50%,#f0f0f4)"></div>
<div class="sb" style="left:880px;top:104px;width:15px;height:15px"><svg class="a" style="left:0;top:0" width="13" height="13"><path d="M3 8l3.5-3.5L10 8" fill="none" stroke="#202020" stroke-width="2"/></svg></div>
<div class="sb" style="left:880px;top:410px;width:15px;height:235px;background:linear-gradient(90deg,#f8f8fc,#e8e8ee 55%,#d8d8e0)"><div class="a" style="left:4px;top:113px;width:6px;height:7px;background:repeating-linear-gradient(#a0a0b0 0,#a0a0b0 1px,transparent 1px,transparent 2px)"></div></div>
<div class="sb" style="left:880px;top:890px;width:15px;height:15px"><svg class="a" style="left:0;top:0" width="13" height="13"><path d="M3 5l3.5 3.5L10 5" fill="none" stroke="#202020" stroke-width="2"/></svg></div>
<div class="a" style="left:31px;top:906px;width:848px;height:15px;background:linear-gradient(#eeeef2,#fdfdfe 50%,#f0f0f4)"></div>
<div class="sb" style="left:31px;top:906px;width:15px;height:15px;background:linear-gradient(#f4f4f8,#e2e2ea)"><svg class="a" style="left:0;top:0" width="13" height="13"><path d="M8 3L4.5 6.5 8 10" fill="none" stroke="#202020" stroke-width="2"/></svg></div>
<div class="sb" style="left:250px;top:906px;width:264px;height:15px;background:linear-gradient(#f8f8fc,#e8e8ee 55%,#d8d8e0)"><div class="a" style="left:128px;top:4px;width:7px;height:6px;background:repeating-linear-gradient(90deg,#a0a0b0 0,#a0a0b0 1px,transparent 1px,transparent 2px)"></div></div>
<div class="sb" style="left:864px;top:906px;width:15px;height:15px;background:linear-gradient(#f4f4f8,#e2e2ea)"><svg class="a" style="left:0;top:0" width="13" height="13"><path d="M5 3l3.5 3.5L5 10" fill="none" stroke="#202020" stroke-width="2"/></svg></div>
<div class="a" style="left:879px;top:906px;width:17px;height:15px;background:#e0dfe3"></div>
<div class="a" style="left:31px;top:921px;width:865px;height:19px;background:#f4f4f6"></div>
<svg class="a" style="left:0;top:0" width="1200" height="960"><path d="M460.3,921 L464.8,935.5 Q465.3,937 466.8,937 L546.5,937 Q548,937 548.5,935.5 L552,921" fill="#fff" stroke="#000" stroke-width="1.2"/><path d="M388.8,921 L393.3,935.5 Q393.8,937 395.3,937 L458.8,937 Q460.3,937 460.8,935.5 L464.3,921" fill="#fff" stroke="#000" stroke-width="1.2"/><path d="M304.6,921 L309.1,935.5 Q309.6,937 311.1,937 L387.3,937 Q388.8,937 389.3,935.5 L392.8,921" fill="#fff" stroke="#000" stroke-width="1.2"/><path d="M220,921 L224.5,935.5 Q225,937 226.5,937 L303.1,937 Q304.6,937 305.1,935.5 L308.6,921" fill="#fff" stroke="#000" stroke-width="1.2"/><path d="M188,921 L192.5,935.5 Q193,937 194.5,937 L218.5,937 Q220,937 220.5,935.5 L224,921" fill="#fff" stroke="#000" stroke-width="1.2"/><path d="M109,921 L113.5,935.5 Q114,937 115.5,937 L186.5,937 Q188,937 188.5,935.5 L192,921" fill="#fff" stroke="#000" stroke-width="1.2"/><path d="M38,921 L42.5,935.5 Q43,937 44.5,937 L107.5,937 Q109,937 109.5,935.5 L113,921" fill="#fff" stroke="#000" stroke-width="1.2"/></svg>
<span class="a" style="left:44.1px;top:924px">Перспектива</span>
<span class="a" style="left:115.1px;top:924px">Аксонометрия</span>
<span class="a" style="left:193.1px;top:924px">План</span>
<span class="a" style="left:226.1px;top:924px">Северная стена</span>
<span class="a" style="left:310.3px;top:924px">Западная стена</span>
<span class="a" style="left:393.5px;top:924px">Южная стена</span>
<span class="a" style="left:465.3px;top:924px">Восточная стена</span>
<div class="a" style="left:0;top:941px;width:1200px;height:1px;background:#a8a8b0"></div>
<div class="a" style="left:0;top:942px;width:1200px;height:18px;background:linear-gradient(#e0dfe3 0,#e0dfe3 16px,#c8c8cc 16px,#c8c8cc 17px,#f4f4f6 17px)"></div>
<span class="a" style="left:2px;top:945px">Элементы: 27</span>
<div class="a" style="left:896px;top:104px;width:304px;height:836px;background:#e0dfe3"></div>
<div class="a" style="left:900px;top:104px;width:296px;height:834px;border:1px solid #b8b8c0;border-right-color:#a0a0a8;background:linear-gradient(#fcfcfd,#f4f4f6 16px,#e8e8ec 18px,#ececf0 36px,#f4f4f6 40px)"></div>
<div class="a" style="left:902px;top:107px;font-weight:bold;color:#a0a0a8;font-size:11px;letter-spacing:0.2px;-webkit-text-stroke-width:0">Библиотека</div>
<svg class="a" style="left:1181px;top:106px" width="15" height="15" viewBox="0 0 15 15"><path d="M3 3l7 7M10 3l-7 7" stroke="#000" stroke-width="1.8"/><path d="M13 1v13H1" fill="none" stroke="#808088"/></svg>
<div class="a" style="left:903px;top:141px;width:292px;height:795px;background:#fcfcfe;border:1px solid #919b9c"></div>
<div class="a" style="left:952px;top:125px;width:58px;height:17px;border:1px solid #a8b0b4;border-bottom:none;border-radius:3px 3px 0 0;background:linear-gradient(#fefefe,#ececee 70%,#d8d8de)"><span class="a" style="left:3px;top:2px">Элементы</span></div>
<div class="a" style="left:1011px;top:125px;width:64px;height:17px;border:1px solid #a8b0b4;border-bottom:none;border-radius:3px 3px 0 0;background:linear-gradient(#fefefe,#ececee 70%,#d8d8de)"><span class="a" style="left:3px;top:2px">Материалы</span></div>
<div class="a" style="left:1077px;top:125px;width:42px;height:17px;border:1px solid #a8b0b4;border-bottom:none;border-radius:3px 3px 0 0;background:linear-gradient(#fefefe,#ececee 70%,#d8d8de)"><span class="a" style="left:3px;top:2px">Другое</span></div>
<div class="a" style="left:902px;top:122px;width:50px;height:21px;border:1px solid #a8b0b4;border-bottom:none;border-radius:3px 3px 0 0;background:#fcfcfe"><div class="a" style="left:-1px;top:-1px;width:50px;height:3px;background:#f0b040;border-radius:3px 3px 0 0"></div><span class="a" style="left:5px;top:4px">Мебель</span></div>
<div class="a" style="left:904px;top:145px;width:220px;height:21px;border:1px solid #a8a8bc;background:#fff"></div>
<svg class="a" style="left:906px;top:148px" width="15" height="15" viewBox="0 0 15 15"><path d="M1 4.5v8.5h13V5.5H7L5.5 3.5H2z" fill="#f4e08c" stroke="#b09838"/><path d="M1 7h13" stroke="#fff6c8"/></svg>
<span class="a" style="left:925px;top:149px">Мебель</span>
<div class="sb" style="left:1106px;top:147px;width:17px;height:17px;background:linear-gradient(#f0f0f6,#d8d8e4)"><svg class="a" width="15" height="15"><path d="M4 6l3.5 3.5L11 6" fill="none" stroke="#202020" stroke-width="2"/></svg></div>
<svg class="a" style="left:1128px;top:147px" width="16" height="16" viewBox="0 0 16 16"><path d="M1.5 4.5v-1.5h5l1 1.5h7v9.5h-13z" fill="#f4f48c" stroke="#202000" stroke-width="1.1"/><path d="M5 12.5V8.5M3 9.5l2-2.5 2 2.5M5 12.5h6" fill="none" stroke="#000" stroke-width="1.5"/></svg>
<div class="pb" style="left:1150px;top:145px;width:22px;height:21px"></div>
<svg class="a" style="left:1153px;top:148px" width="16" height="16" viewBox="0 0 16 16"><path d="M3.5 2.5h2a2 2 0 0 1 0 4h-2z M9.5 8.5h2a2 2 0 0 1 0 4h-2z" fill="none" stroke="#101040" stroke-width="1.2"/><path d="M2 7.5h5M8 13.5h5" stroke="#000" stroke-width="1.2"/></svg>
<svg class="a" style="left:1175px;top:148px" width="17" height="16" viewBox="0 0 17 16"><path d="M1 3h15M1 5.5h15M1 8h15M1 10.5h15M1 13h15" stroke="#303030" stroke-dasharray="1.6 1"/><path d="M1 2.5h15" stroke="#000" stroke-width="1"/></svg>
<div class="a" style="left:904px;top:170px;width:290px;height:765px;border:1px solid #a8a8b0;background:#fff"></div>
<div class="a" style="left:1176px;top:171px;width:17px;height:763px;background:linear-gradient(90deg,#eeeef2,#fdfdfe 50%,#f0f0f4)"></div>
<div class="sb" style="left:1177px;top:172px;width:15px;height:16px"><svg class="a" width="13" height="14"><path d="M3 9l3.5-3.5L10 9" fill="none" stroke="#202020" stroke-width="2"/></svg></div>
<div class="sb" style="left:1177px;top:189px;width:15px;height:487px;background:linear-gradient(90deg,#f8f8fc,#e8e8ee 55%,#d8d8e0)"><div class="a" style="left:4px;top:240px;width:6px;height:7px;background:repeating-linear-gradient(#a0a0b0 0,#a0a0b0 1px,transparent 1px,transparent 2px)"></div></div>
<div class="sb" style="left:1177px;top:917px;width:15px;height:16px"><svg class="a" width="13" height="14"><path d="M3 5l3.5 3.5L10 5" fill="none" stroke="#202020" stroke-width="2"/></svg></div>
<svg class="a" style="left:951px;top:199px" width="25" height="24" viewBox="0 0 25 24"><defs><linearGradient id="fg" x1="0" y1="0" x2="0.2" y2="1"><stop offset="0" stop-color="#fffbd0"/><stop offset="1" stop-color="#ecd470"/></linearGradient></defs><path d="M2.5 4 Q2.5 2 4.5 2 L9 1.5 L11 3.5 L21 3 Q22.5 3 22.5 4.5 L22 17 L3 21 Z" fill="#e4cc68" stroke="#b89a40" stroke-width="1"/><path d="M2 9 L22.5 6 Q23.5 6 23.3 7.2 L21.5 18.8 Q21.3 19.8 20.3 20 L4 22.5 Q2.8 22.6 2.7 21.5 Z" fill="url(#fg)" stroke="#b89838" stroke-width="0.9"/><path d="M3.5 10 L21.5 7.3" stroke="#fffce0" stroke-width="1"/></svg>
<div class="a" style="left:903px;top:252px;width:120px;text-align:center">Kuhnia_NOVA</div>
<svg class="a" style="left:1066px;top:199px" width="25" height="24" viewBox="0 0 25 24"><defs><linearGradient id="fg" x1="0" y1="0" x2="0.2" y2="1"><stop offset="0" stop-color="#fffbd0"/><stop offset="1" stop-color="#ecd470"/></linearGradient></defs><path d="M2.5 4 Q2.5 2 4.5 2 L9 1.5 L11 3.5 L21 3 Q22.5 3 22.5 4.5 L22 17 L3 21 Z" fill="#e4cc68" stroke="#b89a40" stroke-width="1"/><path d="M2 9 L22.5 6 Q23.5 6 23.3 7.2 L21.5 18.8 Q21.3 19.8 20.3 20 L4 22.5 Q2.8 22.6 2.7 21.5 Z" fill="url(#fg)" stroke="#b89838" stroke-width="0.9"/><path d="M3.5 10 L21.5 7.3" stroke="#fffce0" stroke-width="1"/></svg>
<div class="a" style="left:1018px;top:252px;width:120px;text-align:center">Meblotap</div>
<svg class="a" style="left:951px;top:315px" width="25" height="24" viewBox="0 0 25 24"><defs><linearGradient id="fg" x1="0" y1="0" x2="0.2" y2="1"><stop offset="0" stop-color="#fffbd0"/><stop offset="1" stop-color="#ecd470"/></linearGradient></defs><path d="M2.5 4 Q2.5 2 4.5 2 L9 1.5 L11 3.5 L21 3 Q22.5 3 22.5 4.5 L22 17 L3 21 Z" fill="#e4cc68" stroke="#b89a40" stroke-width="1"/><path d="M2 9 L22.5 6 Q23.5 6 23.3 7.2 L21.5 18.8 Q21.3 19.8 20.3 20 L4 22.5 Q2.8 22.6 2.7 21.5 Z" fill="url(#fg)" stroke="#b89838" stroke-width="0.9"/><path d="M3.5 10 L21.5 7.3" stroke="#fffce0" stroke-width="1"/></svg>
<div class="a" style="left:903px;top:368px;width:120px;text-align:center">Алюминий</div>
<svg class="a" style="left:1066px;top:315px" width="25" height="24" viewBox="0 0 25 24"><defs><linearGradient id="fg" x1="0" y1="0" x2="0.2" y2="1"><stop offset="0" stop-color="#fffbd0"/><stop offset="1" stop-color="#ecd470"/></linearGradient></defs><path d="M2.5 4 Q2.5 2 4.5 2 L9 1.5 L11 3.5 L21 3 Q22.5 3 22.5 4.5 L22 17 L3 21 Z" fill="#e4cc68" stroke="#b89a40" stroke-width="1"/><path d="M2 9 L22.5 6 Q23.5 6 23.3 7.2 L21.5 18.8 Q21.3 19.8 20.3 20 L4 22.5 Q2.8 22.6 2.7 21.5 Z" fill="url(#fg)" stroke="#b89838" stroke-width="0.9"/><path d="M3.5 10 L21.5 7.3" stroke="#fffce0" stroke-width="1"/></svg>
<div class="a" style="left:1018px;top:368px;width:120px;text-align:center">Ванная</div>
<svg class="a" style="left:951px;top:430px" width="25" height="24" viewBox="0 0 25 24"><defs><linearGradient id="fg" x1="0" y1="0" x2="0.2" y2="1"><stop offset="0" stop-color="#fffbd0"/><stop offset="1" stop-color="#ecd470"/></linearGradient></defs><path d="M2.5 4 Q2.5 2 4.5 2 L9 1.5 L11 3.5 L21 3 Q22.5 3 22.5 4.5 L22 17 L3 21 Z" fill="#e4cc68" stroke="#b89a40" stroke-width="1"/><path d="M2 9 L22.5 6 Q23.5 6 23.3 7.2 L21.5 18.8 Q21.3 19.8 20.3 20 L4 22.5 Q2.8 22.6 2.7 21.5 Z" fill="url(#fg)" stroke="#b89838" stroke-width="0.9"/><path d="M3.5 10 L21.5 7.3" stroke="#fffce0" stroke-width="1"/></svg>
<div class="a" style="left:903px;top:483px;width:120px;text-align:center">Гостинная</div>
<svg class="a" style="left:1066px;top:430px" width="25" height="24" viewBox="0 0 25 24"><defs><linearGradient id="fg" x1="0" y1="0" x2="0.2" y2="1"><stop offset="0" stop-color="#fffbd0"/><stop offset="1" stop-color="#ecd470"/></linearGradient></defs><path d="M2.5 4 Q2.5 2 4.5 2 L9 1.5 L11 3.5 L21 3 Q22.5 3 22.5 4.5 L22 17 L3 21 Z" fill="#e4cc68" stroke="#b89a40" stroke-width="1"/><path d="M2 9 L22.5 6 Q23.5 6 23.3 7.2 L21.5 18.8 Q21.3 19.8 20.3 20 L4 22.5 Q2.8 22.6 2.7 21.5 Z" fill="url(#fg)" stroke="#b89838" stroke-width="0.9"/><path d="M3.5 10 L21.5 7.3" stroke="#fffce0" stroke-width="1"/></svg>
<div class="a" style="left:1018px;top:483px;width:120px;text-align:center">Детская</div>
<svg class="a" style="left:951px;top:545px" width="25" height="24" viewBox="0 0 25 24"><defs><linearGradient id="fg" x1="0" y1="0" x2="0.2" y2="1"><stop offset="0" stop-color="#fffbd0"/><stop offset="1" stop-color="#ecd470"/></linearGradient></defs><path d="M2.5 4 Q2.5 2 4.5 2 L9 1.5 L11 3.5 L21 3 Q22.5 3 22.5 4.5 L22 17 L3 21 Z" fill="#e4cc68" stroke="#b89a40" stroke-width="1"/><path d="M2 9 L22.5 6 Q23.5 6 23.3 7.2 L21.5 18.8 Q21.3 19.8 20.3 20 L4 22.5 Q2.8 22.6 2.7 21.5 Z" fill="url(#fg)" stroke="#b89838" stroke-width="0.9"/><path d="M3.5 10 L21.5 7.3" stroke="#fffce0" stroke-width="1"/></svg>
<div class="a" style="left:903px;top:598px;width:120px;text-align:center">Другое</div>
<svg class="a" style="left:1066px;top:545px" width="25" height="24" viewBox="0 0 25 24"><defs><linearGradient id="fg" x1="0" y1="0" x2="0.2" y2="1"><stop offset="0" stop-color="#fffbd0"/><stop offset="1" stop-color="#ecd470"/></linearGradient></defs><path d="M2.5 4 Q2.5 2 4.5 2 L9 1.5 L11 3.5 L21 3 Q22.5 3 22.5 4.5 L22 17 L3 21 Z" fill="#e4cc68" stroke="#b89a40" stroke-width="1"/><path d="M2 9 L22.5 6 Q23.5 6 23.3 7.2 L21.5 18.8 Q21.3 19.8 20.3 20 L4 22.5 Q2.8 22.6 2.7 21.5 Z" fill="url(#fg)" stroke="#b89838" stroke-width="0.9"/><path d="M3.5 10 L21.5 7.3" stroke="#fffce0" stroke-width="1"/></svg>
<div class="a" style="left:1018px;top:598px;width:120px;text-align:center">Жилая комната</div>
<svg class="a" style="left:951px;top:661px" width="25" height="24" viewBox="0 0 25 24"><defs><linearGradient id="fg" x1="0" y1="0" x2="0.2" y2="1"><stop offset="0" stop-color="#fffbd0"/><stop offset="1" stop-color="#ecd470"/></linearGradient></defs><path d="M2.5 4 Q2.5 2 4.5 2 L9 1.5 L11 3.5 L21 3 Q22.5 3 22.5 4.5 L22 17 L3 21 Z" fill="#e4cc68" stroke="#b89a40" stroke-width="1"/><path d="M2 9 L22.5 6 Q23.5 6 23.3 7.2 L21.5 18.8 Q21.3 19.8 20.3 20 L4 22.5 Q2.8 22.6 2.7 21.5 Z" fill="url(#fg)" stroke="#b89838" stroke-width="0.9"/><path d="M3.5 10 L21.5 7.3" stroke="#fffce0" stroke-width="1"/></svg>
<div class="a" style="left:903px;top:714px;width:120px;text-align:center">Кухни СКИФ</div>
<svg class="a" style="left:1066px;top:661px" width="25" height="24" viewBox="0 0 25 24"><defs><linearGradient id="fg" x1="0" y1="0" x2="0.2" y2="1"><stop offset="0" stop-color="#fffbd0"/><stop offset="1" stop-color="#ecd470"/></linearGradient></defs><path d="M2.5 4 Q2.5 2 4.5 2 L9 1.5 L11 3.5 L21 3 Q22.5 3 22.5 4.5 L22 17 L3 21 Z" fill="#e4cc68" stroke="#b89a40" stroke-width="1"/><path d="M2 9 L22.5 6 Q23.5 6 23.3 7.2 L21.5 18.8 Q21.3 19.8 20.3 20 L4 22.5 Q2.8 22.6 2.7 21.5 Z" fill="url(#fg)" stroke="#b89838" stroke-width="0.9"/><path d="M3.5 10 L21.5 7.3" stroke="#fffce0" stroke-width="1"/></svg>
<div class="a" style="left:1018px;top:714px;width:120px;text-align:center">Кухня</div>
<svg class="a" style="left:951px;top:777px" width="25" height="24" viewBox="0 0 25 24"><defs><linearGradient id="fg" x1="0" y1="0" x2="0.2" y2="1"><stop offset="0" stop-color="#fffbd0"/><stop offset="1" stop-color="#ecd470"/></linearGradient></defs><path d="M2.5 4 Q2.5 2 4.5 2 L9 1.5 L11 3.5 L21 3 Q22.5 3 22.5 4.5 L22 17 L3 21 Z" fill="#e4cc68" stroke="#b89a40" stroke-width="1"/><path d="M2 9 L22.5 6 Q23.5 6 23.3 7.2 L21.5 18.8 Q21.3 19.8 20.3 20 L4 22.5 Q2.8 22.6 2.7 21.5 Z" fill="url(#fg)" stroke="#b89838" stroke-width="0.9"/><path d="M3.5 10 L21.5 7.3" stroke="#fffce0" stroke-width="1"/></svg>
<div class="a" style="left:903px;top:830px;width:120px;text-align:center">Офис</div>
<svg class="a" style="left:1066px;top:777px" width="25" height="24" viewBox="0 0 25 24"><defs><linearGradient id="fg" x1="0" y1="0" x2="0.2" y2="1"><stop offset="0" stop-color="#fffbd0"/><stop offset="1" stop-color="#ecd470"/></linearGradient></defs><path d="M2.5 4 Q2.5 2 4.5 2 L9 1.5 L11 3.5 L21 3 Q22.5 3 22.5 4.5 L22 17 L3 21 Z" fill="#e4cc68" stroke="#b89a40" stroke-width="1"/><path d="M2 9 L22.5 6 Q23.5 6 23.3 7.2 L21.5 18.8 Q21.3 19.8 20.3 20 L4 22.5 Q2.8 22.6 2.7 21.5 Z" fill="url(#fg)" stroke="#b89838" stroke-width="0.9"/><path d="M3.5 10 L21.5 7.3" stroke="#fffce0" stroke-width="1"/></svg>
<div class="a" style="left:1018px;top:830px;width:120px;text-align:center">Прихожая</div>
<svg class="a" style="left:951px;top:892px" width="25" height="24" viewBox="0 0 25 24"><defs><linearGradient id="fg" x1="0" y1="0" x2="0.2" y2="1"><stop offset="0" stop-color="#fffbd0"/><stop offset="1" stop-color="#ecd470"/></linearGradient></defs><path d="M2.5 4 Q2.5 2 4.5 2 L9 1.5 L11 3.5 L21 3 Q22.5 3 22.5 4.5 L22 17 L3 21 Z" fill="#e4cc68" stroke="#b89a40" stroke-width="1"/><path d="M2 9 L22.5 6 Q23.5 6 23.3 7.2 L21.5 18.8 Q21.3 19.8 20.3 20 L4 22.5 Q2.8 22.6 2.7 21.5 Z" fill="url(#fg)" stroke="#b89838" stroke-width="0.9"/><path d="M3.5 10 L21.5 7.3" stroke="#fffce0" stroke-width="1"/></svg>
<svg class="a" style="left:1066px;top:892px" width="25" height="24" viewBox="0 0 25 24"><defs><linearGradient id="fg" x1="0" y1="0" x2="0.2" y2="1"><stop offset="0" stop-color="#fffbd0"/><stop offset="1" stop-color="#ecd470"/></linearGradient></defs><path d="M2.5 4 Q2.5 2 4.5 2 L9 1.5 L11 3.5 L21 3 Q22.5 3 22.5 4.5 L22 17 L3 21 Z" fill="#e4cc68" stroke="#b89a40" stroke-width="1"/><path d="M2 9 L22.5 6 Q23.5 6 23.3 7.2 L21.5 18.8 Q21.3 19.8 20.3 20 L4 22.5 Q2.8 22.6 2.7 21.5 Z" fill="url(#fg)" stroke="#b89838" stroke-width="0.9"/><path d="M3.5 10 L21.5 7.3" stroke="#fffce0" stroke-width="1"/></svg>
<div class="a" style="left:896px;top:936px;width:304px;height:4px;background:#e0dfe3"></div>
<div class="a" style="left:1197px;top:104px;width:3px;height:836px;background:#e0dfe3"></div>
</body></html>
